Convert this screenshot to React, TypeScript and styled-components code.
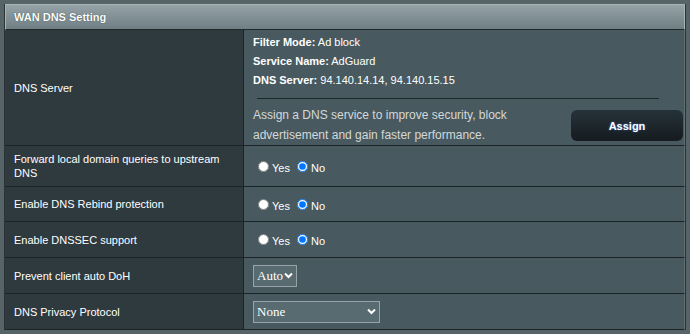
import React from "react";
import styled, { createGlobalStyle } from "styled-components";

const Global = createGlobalStyle`
  html, body { margin: 0; padding: 0; background: #566467; }
  body { font-family: "Liberation Sans", Arial, sans-serif; }
`;

const Page = styled.div`
  width: 690px;
  height: 334px;
  padding: 4px;
  box-sizing: border-box;
  background: #566467;
`;

const Table = styled.div`
  display: grid;
  grid-template-columns: 239px 1fr;
  grid-template-rows: 26px 116px 41px 35px 36px 36px 36px;
  border: 1px solid #2a3236;
  border-top: none;
  background: #1f2629;
  height: 326px;
  box-sizing: border-box;
`;

const Header = styled.div`
  grid-column: 1 / 3;
  display: flex;
  align-items: center;
  padding-left: 8px;
  background: linear-gradient(#95a3a8, #6f7f84);
  border: 1px solid #a8b4b8;
  border-bottom: 1px solid #20282b;
  color: #fff;
  font-weight: bold;
  font-size: 11px;
  text-shadow: 0 0 1px #233;
`;

const Label = styled.div`
  display: flex;
  align-items: center;
  padding: 0 3px 0 9px;
  background: #2f3a3f;
  color: #fff;
  font-size: 11px;
  line-height: 14px;
  border-bottom: 1px solid #1c2326;
  border-right: 1px solid #1c2326;
`;

const Cell = styled.div<{ $top?: boolean }>`
  display: flex;
  flex-direction: column;
  justify-content: ${(p) => (p.$top ? "flex-start" : "center")};
  padding: ${(p) => (p.$top ? "5px 1px 0 9px" : "0 9px")};
  background: #485a5f;
  color: #fff;
  font-size: 11px;
  border-bottom: 1px solid #1c2326;
  border-right: 1px solid #5f6f73;
`;

const InfoLine = styled.div`
  line-height: 14px;
  height: 20px;
  b { font-weight: bold; }
`;

const Divider = styled.hr`
  border: none;
  border-top: 1px solid #1f2629;
  margin: 6px 0 0 4px;
  width: 402px;
`;

const AssignRow = styled.div`
  display: flex;
  justify-content: space-between;
  align-items: flex-start;
  margin-top: 6px;
`;

const Desc = styled.div`
  color: #d4d8d9;
  font-size: 12px;
  line-height: 20px;
  width: 290px;
`;

const AssignButton = styled.button`
  width: 112px;
  height: 31px;
  margin-top: 5px;
  border: none;
  border-radius: 6px;
  background: linear-gradient(#26323a, #151b1f);
  color: #fff;
  font-family: "Liberation Sans", Arial, sans-serif;
  font-weight: bold;
  font-size: 11px;
  text-shadow: 0 0 2px #3a7bd5;
  cursor: pointer;
`;

const RadioGroup = styled.div`
  display: flex;
  align-items: center;
  padding-top: 3px;
`;

const RadioLabel = styled.label`
  display: inline-flex;
  align-items: center;
  font-size: 11px;
  color: #fff;
  margin-right: 2px;
  input {
    margin: 0 3px 3px 5px;
    width: 11px;
    height: 11px;
  }
`;

const SelectWrap = styled.div<{ $w: number }>`
  position: relative;
  width: ${(p) => p.$w}px;
  height: 22px;
`;

const Select = styled.select`
  appearance: none;
  width: 100%;
  height: 100%;
  background: #576b71;
  border: 1px solid #96a3a7;
  color: #fff;
  font-family: "Liberation Serif", "Times New Roman", serif;
  font-size: 13px;
  padding: 0 0 0 3px;
  outline: none;
`;

const Chevron = styled.svg`
  position: absolute;
  right: 4px;
  top: 7px;
  pointer-events: none;
`;

const ChevronIcon = () => (
  <Chevron width="9" height="7" viewBox="0 0 9 7">
    <path d="M1 1.5 L4.5 5 L8 1.5" stroke="#fff" strokeWidth="2" fill="none" />
  </Chevron>
);

const YesNo = ({ name }: { name: string }) => (
  <RadioGroup>
    <RadioLabel>
      <input type="radio" name={name} />
      Yes
    </RadioLabel>
    <RadioLabel>
      <input type="radio" name={name} defaultChecked />
      No
    </RadioLabel>
  </RadioGroup>
);

export default function App() {
  return (
    <Page>
      <Global />
      <Table>
        <Header>WAN DNS Setting</Header>

        <Label>DNS Server</Label>
        <Cell $top>
          <InfoLine>
            <b>Filter Mode:</b> Ad block
          </InfoLine>
          <InfoLine>
            <b>Service Name:</b> AdGuard
          </InfoLine>
          <InfoLine>
            <b>DNS Server:</b> 94.140.14.14, 94.140.15.15
          </InfoLine>
          <Divider />
          <AssignRow>
            <Desc>
              Assign a DNS service to improve security, block advertisement and
              gain faster performance.
            </Desc>
            <AssignButton>Assign</AssignButton>
          </AssignRow>
        </Cell>

        <Label>Forward local domain queries to upstream DNS</Label>
        <Cell>
          <YesNo name="fwd" />
        </Cell>

        <Label>Enable DNS Rebind protection</Label>
        <Cell>
          <YesNo name="rebind" />
        </Cell>

        <Label>Enable DNSSEC support</Label>
        <Cell>
          <YesNo name="dnssec" />
        </Cell>

        <Label>Prevent client auto DoH</Label>
        <Cell>
          <SelectWrap $w={44}>
            <Select defaultValue="auto">
              <option value="auto">Auto</option>
            </Select>
            <ChevronIcon />
          </SelectWrap>
        </Cell>

        <Label>DNS Privacy Protocol</Label>
        <Cell>
          <SelectWrap $w={127}>
            <Select defaultValue="none">
              <option value="none">None</option>
            </Select>
            <ChevronIcon />
          </SelectWrap>
        </Cell>
      </Table>
    </Page>
  );
}
